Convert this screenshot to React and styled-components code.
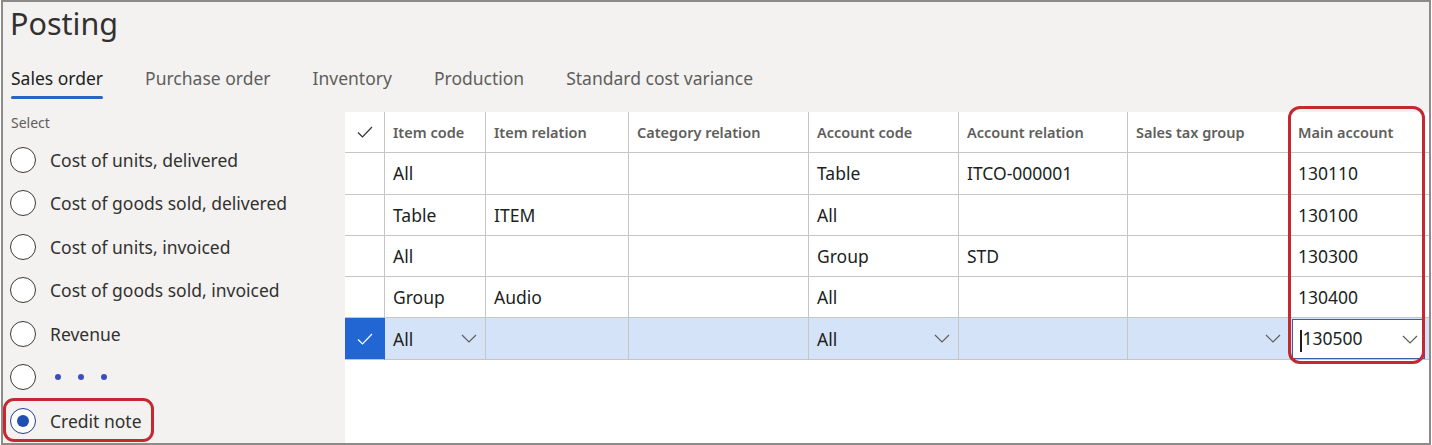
import React from "react";
import styled, { createGlobalStyle } from "styled-components";

const GlobalStyle = createGlobalStyle`
  body {
    margin: 0;
    background: #ffffff;
    font-family: "Noto Sans", "Open Sans", sans-serif;
  }
`;

const Frame = styled.div`
  box-sizing: border-box;
  width: 1430px;
  height: 445px;
  margin-left: 1px;
  border: 2px solid #8d8b89;
  background: #f3f2f1;
  display: flex;
  flex-direction: column;
  overflow: hidden;
`;

const Title = styled.h1`
  margin: 0;
  padding-left: 7px;
  height: 42px;
  line-height: 42px;
  font-size: 30.5px;
  font-weight: 400;
  color: #323130;
`;

const TabBar = styled.div`
  display: flex;
  gap: 42px;
  padding-left: 8px;
  height: 68px;
`;

const Tab = styled.div`
  padding-top: 22px;
  font-size: 17.5px;
  line-height: 24px;
  color: ${(p) => (p.active ? "#201f1e" : "#605e5c")};
  &::after {
    content: "";
    display: block;
    margin-top: 6px;
    height: 3px;
    border-radius: 2px;
    background: ${(p) => (p.active ? "#2b63c6" : "transparent")};
  }
`;

const Body = styled.div`
  display: flex;
  flex: 1;
  min-height: 0;
`;

const LeftPanel = styled.div`
  width: 342px;
  flex-shrink: 0;
  display: flex;
  flex-direction: column;
`;

const SelectLabel = styled.div`
  padding: 1px 0 0 8px;
  height: 25px;
  line-height: 20px;
  font-size: 14px;
  color: #605e5c;
`;

const RadioRow = styled.div`
  position: relative;
  display: flex;
  align-items: center;
  gap: 14px;
  height: 43.5px;
  padding-left: 7px;
  font-size: 17.5px;
  color: #323130;
`;

const RadioCircle = styled.span`
  box-sizing: border-box;
  width: 26px;
  height: 26px;
  border-radius: 50%;
  border: 1.5px solid ${(p) => (p.checked ? "#1e3f8f" : "#3b3a39")};
  background: #ffffff;
  display: flex;
  align-items: center;
  justify-content: center;
  &::after {
    content: "";
    width: 12px;
    height: 12px;
    border-radius: 50%;
    background: ${(p) => (p.checked ? "#1f4fb3" : "transparent")};
  }
`;

const Dots = styled.span`
  display: flex;
  gap: 17px;
  padding-left: 5px;
  span {
    width: 6px;
    height: 6px;
    border-radius: 50%;
    background: #3c4dc0;
  }
`;

const Highlight = styled.span`
  position: absolute;
  left: 0;
  top: -1px;
  width: 151px;
  height: 44px;
  box-sizing: border-box;
  border: 3px solid #c62832;
  border-radius: 11px;
  pointer-events: none;
`;

const GridPanel = styled.div`
  position: relative;
  flex: 1;
  background: #ffffff;
`;

const Grid = styled.div`
  display: grid;
  grid-template-columns: 40px 101px 143px 180px 150px 169px 162px 1fr;
  grid-auto-rows: 41.3px;
`;

const Cell = styled.div`
  position: relative;
  box-sizing: border-box;
  display: flex;
  align-items: center;
  justify-content: space-between;
  padding: 0 8px;
  border-bottom: 1px solid #c8c6c4;
  border-right: ${(p) => (p.last ? "none" : "1px solid #c8c6c4")};
  background: ${(p) => (p.selected ? "#d5e3f8" : "#ffffff")};
  font-size: ${(p) => (p.head ? "14.5px" : "17.5px")};
  font-weight: ${(p) => (p.head ? 600 : 400)};
  color: ${(p) => (p.head ? "#605e5c" : "#201f1e")};
  white-space: nowrap;
`;

const CheckCell = styled(Cell)`
  justify-content: center;
  padding: 0;
  background: ${(p) => (p.selected ? "#2266d4" : "#ffffff")};
  border-right-color: ${(p) => (p.selected ? "#2266d4" : "#c8c6c4")};
`;

const InputBox = styled.div`
  position: absolute;
  inset: 1px 4px 0 2px;
  box-sizing: border-box;
  border: 1px solid #3d5fa6;
  background: #ffffff;
  display: flex;
  align-items: center;
  justify-content: space-between;
  padding: 0 6px 0 7px;
`;

const Caret = styled.span`
  display: inline-block;
  width: 1.5px;
  height: 22px;
  margin-right: 1px;
  background: #201f1e;
  vertical-align: middle;
`;

const ColumnHighlight = styled.div`
  position: absolute;
  left: 943px;
  top: -6px;
  width: 137px;
  height: 258px;
  box-sizing: border-box;
  border: 3px solid #c62832;
  border-radius: 12px;
  pointer-events: none;
`;

const Check = ({ color }) => (
  <svg width="16" height="12" viewBox="0 0 16 12">
    <path d="M1 6.5 L5.5 11 L15 1" fill="none" stroke={color} strokeWidth="1.2" />
  </svg>
);

const Chevron = () => (
  <svg width="16" height="9" viewBox="0 0 16 9">
    <path d="M1 1 L8 8 L15 1" fill="none" stroke="#605e5c" strokeWidth="1.2" />
  </svg>
);

const tabs = ["Sales order", "Purchase order", "Inventory", "Production", "Standard cost variance"];
const options = [
  "Cost of units, delivered",
  "Cost of goods sold, delivered",
  "Cost of units, invoiced",
  "Cost of goods sold, invoiced",
  "Revenue",
];
const columns = [
  "Item code",
  "Item relation",
  "Category relation",
  "Account code",
  "Account relation",
  "Sales tax group",
  "Main account",
];
const rows = [
  ["All", "", "", "Table", "ITCO-000001", "", "130110"],
  ["Table", "ITEM", "", "All", "", "", "130100"],
  ["All", "", "", "Group", "STD", "", "130300"],
  ["Group", "Audio", "", "All", "", "", "130400"],
];
const editRow = ["All", "", "", "All", "", "", "130500"];
const dropdownCols = [0, 3, 5];

export default function App() {
  return (
    <>
      <GlobalStyle />
      <Frame>
        <Title>Posting</Title>
        <TabBar>
          {tabs.map((t, i) => (
            <Tab key={t} active={i === 0}>
              {t}
            </Tab>
          ))}
        </TabBar>
        <Body>
          <LeftPanel>
            <SelectLabel>Select</SelectLabel>
            {options.map((o) => (
              <RadioRow key={o}>
                <RadioCircle />
                {o}
              </RadioRow>
            ))}
            <RadioRow>
              <RadioCircle />
              <Dots>
                <span />
                <span />
                <span />
              </Dots>
            </RadioRow>
            <RadioRow>
              <RadioCircle checked />
              Credit note
              <Highlight />
            </RadioRow>
          </LeftPanel>
          <GridPanel>
            <Grid>
              <CheckCell head>
                <Check color="#323130" />
              </CheckCell>
              {columns.map((c, i) => (
                <Cell head key={c} last={i === columns.length - 1}>
                  {c}
                </Cell>
              ))}
              {rows.map((r, ri) =>
                [<CheckCell key={"c" + ri} />].concat(
                  r.map((v, ci) => (
                    <Cell key={ri + "-" + ci} last={ci === r.length - 1}>
                      {v}
                    </Cell>
                  ))
                )
              )}
              <CheckCell selected>
                <Check color="#ffffff" />
              </CheckCell>
              {editRow.map((v, ci) =>
                ci === editRow.length - 1 ? (
                  <Cell selected last key={"e" + ci}>
                    <InputBox>
                      <span>
                        <Caret />
                        {v}
                      </span>
                      <Chevron />
                    </InputBox>
                  </Cell>
                ) : (
                  <Cell selected key={"e" + ci}>
                    <span>{v}</span>
                    {dropdownCols.includes(ci) && <Chevron />}
                  </Cell>
                )
              )}
            </Grid>
            <ColumnHighlight />
          </GridPanel>
        </Body>
      </Frame>
    </>
  );
}
